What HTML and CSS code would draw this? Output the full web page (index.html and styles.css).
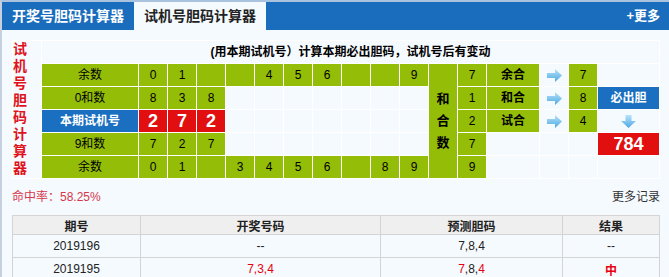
FILE: index.html
```html
<!DOCTYPE html>
<html lang="zh-CN">
<head>
    <meta charset="UTF-8">
    <title>试机号胆码计算器</title>
    <link rel="stylesheet" href="styles.css">
</head>
<body>
    <svg class="defs" width="0" height="0">
        <defs>
            <linearGradient id="arrow-fill" x1="0" y1="0" x2="0" y2="1">
                <stop offset="0" stop-color="#b6e3fb"/>
                <stop offset="1" stop-color="#4da8e3"/>
            </linearGradient>
        </defs>
    </svg>
    <div class="box">
        <div class="tabs">
            <a class="tab">开奖号胆码计算器</a>
            <a class="tab on">试机号胆码计算器</a>
            <a class="more">+更多</a>
        </div>
        <div class="main">
            <table class="calc">
                <colgroup>
                    <col class="c-side"><col class="c-label">
                    <col class="c-num"><col class="c-num"><col class="c-num"><col class="c-num"><col class="c-num">
                    <col class="c-num"><col class="c-num"><col class="c-num"><col class="c-num"><col class="c-num">
                    <col class="c-num"><col class="c-num"><col class="c-op"><col class="c-num"><col class="c-num"><col class="c-out">
                </colgroup>
                <tr>
                    <td class="side" rowspan="6">试<br>机<br>号<br>胆<br>码<br>计<br>算<br>器</td>
                    <td class="title" colspan="17">(用本期试机号）计算本期必出胆码，试机号后有变动</td>
                </tr>
                <tr>
                    <td class="g">余数</td>
                    <td class="g">0</td><td class="g">1</td><td class="g"></td><td class="g"></td><td class="g">4</td>
                    <td class="g">5</td><td class="g">6</td><td class="g"></td><td class="g"></td><td class="g">9</td>
                    <td class="g sum" rowspan="5">和<br>合<br>数</td>
                    <td class="g">7</td><td class="g b">余合</td>
                    <td><svg class="arr" width="15" height="13" viewBox="0 0 15 13"><path d="M0 4H8V0L15 6.5L8 13V9H0Z" fill="url(#arrow-fill)"/></svg></td>
                    <td class="g">7</td><td></td>
                </tr>
                <tr>
                    <td class="g">0和数</td>
                    <td class="g">8</td><td class="g">3</td><td class="g">8</td>
                    <td></td><td></td><td></td><td></td><td></td><td></td><td></td>
                    <td class="g">1</td><td class="g b">和合</td>
                    <td><svg class="arr" width="15" height="13" viewBox="0 0 15 13"><path d="M0 4H8V0L15 6.5L8 13V9H0Z" fill="url(#arrow-fill)"/></svg></td>
                    <td class="g">8</td><td class="blue">必出胆</td>
                </tr>
                <tr>
                    <td class="blue">本期试机号</td>
                    <td class="red big">2</td><td class="red big">7</td><td class="red big">2</td>
                    <td></td><td></td><td></td><td></td><td></td><td></td><td></td>
                    <td class="g">2</td><td class="g b">试合</td>
                    <td><svg class="arr" width="15" height="13" viewBox="0 0 15 13"><path d="M0 4H8V0L15 6.5L8 13V9H0Z" fill="url(#arrow-fill)"/></svg></td>
                    <td class="g">4</td>
                    <td><svg class="arr" width="15" height="13" viewBox="0 0 15 13"><path d="M4.5 0H10.5V6H15L7.5 13L0 6H4.5Z" fill="url(#arrow-fill)"/></svg></td>
                </tr>
                <tr>
                    <td class="g">9和数</td>
                    <td class="g">7</td><td class="g">2</td><td class="g">7</td>
                    <td></td><td></td><td></td><td></td><td></td><td></td><td></td>
                    <td class="g">7</td><td></td><td></td><td></td>
                    <td class="red big">784</td>
                </tr>
                <tr>
                    <td class="g">余数</td>
                    <td class="g">0</td><td class="g">1</td><td class="g"></td><td class="g">3</td><td class="g">4</td>
                    <td class="g">5</td><td class="g">6</td><td class="g"></td><td class="g">8</td><td class="g">9</td>
                    <td class="g">9</td><td></td><td></td><td></td><td></td>
                </tr>
            </table>

            <div class="stat">
                <span class="rate">命中率：58.25%</span>
                <a class="log">更多记录</a>
            </div>

            <table class="hist">
                <colgroup>
                    <col class="h-issue"><col class="h-draw"><col class="h-pred"><col class="h-res">
                </colgroup>
                <tr>
                    <th>期号</th><th>开奖号码</th><th>预测胆码</th><th>结果</th>
                </tr>
                <tr>
                    <td>2019196</td><td>--</td><td>7,8,4</td><td>--</td>
                </tr>
                <tr>
                    <td>2019195</td><td class="hit">7,3,4</td>
                    <td><span class="hit">7</span>,8,<span class="hit">4</span></td>
                    <td class="hit b">中</td>
                </tr>
            </table>
        </div>
    </div>
</body>
</html>
```

FILE: styles.css
```css
body {
    margin: 0;
    font-family: "Liberation Sans", "Noto Sans CJK SC", sans-serif;
    font-size: 12px;
    color: #000;
    background-color: #f5faff;
}
.defs {
    display: block;
    height: 0;
}
.box {
    border-top: 2px solid #a9c3de;
    border-left: 2px solid #c5d1de;
    background-color: #f5faff;
    height: 300px;
}
.tabs {
    display: flex;
    height: 28px;
    background-color: #1a6dbd;
}
.tab {
    width: 132px;
    text-align: center;
    line-height: 28px;
    font-size: 14px;
    font-weight: bold;
    color: #fff;
}
.tab.on {
    background-color: #f5faff;
    color: #222;
}
.more {
    margin-left: auto;
    padding-right: 9px;
    line-height: 28px;
    font-size: 13px;
    font-weight: bold;
    color: #fff;
}
.main {
    padding: 10px 0 0 10px;
}

/* calculator grid */
.calc {
    width: 648px;
    table-layout: fixed;
    border-spacing: 1px;
    background-color: #fff;
}
.calc td {
    height: 22px;
    padding: 0;
    text-align: center;
    vertical-align: middle;
    line-height: 16px;
    font-size: 12px;
    background-color: #f5faff;
}
.c-side { width: 28px; }
.c-label { width: 96px; }
.c-num { width: 28px; }
.c-op { width: 52px; }
.c-out { width: 61px; }
.calc td.side {
    vertical-align: top;
    text-align: left;
    line-height: 17px;
    font-size: 14px;
    font-weight: bold;
    color: #e0121b;
}
.calc td.title {
    font-weight: bold;
}
.calc td.g {
    background-color: #94bd08;
}
.calc td.sum {
    line-height: 22px;
    font-size: 13px;
    font-weight: bold;
}
.calc td.blue {
    background-color: #1a6fc0;
    color: #fff;
    font-weight: bold;
}
.calc td.red {
    background-color: #e10f10;
    color: #fff;
    font-weight: bold;
}
.calc td.big {
    font-size: 18px;
}
.b {
    font-weight: bold;
}
.arr {
    display: block;
    margin: 0 auto;
}

/* record */
.stat {
    display: flex;
    justify-content: space-between;
    width: 648px;
    margin: 9px 0;
    line-height: 18px;
}
.rate {
    color: #d6374a;
}
.log {
    color: #333;
}
.hist {
    width: 647px;
    table-layout: fixed;
    border-collapse: collapse;
}
.h-issue { width: 128px; }
.h-draw { width: 240px; }
.h-pred { width: 182px; }
.h-res { width: 97px; }
.hist th,
.hist td {
    border: 1px solid #d4d4d4;
    padding: 0;
    text-align: center;
    font-size: 12px;
    color: #222;
}
.hist th {
    height: 18px;
    background-color: #efefef;
    font-weight: bold;
}
.hist td {
    height: 22px;
}
.hist .hit {
    color: #e8000f;
}
```
